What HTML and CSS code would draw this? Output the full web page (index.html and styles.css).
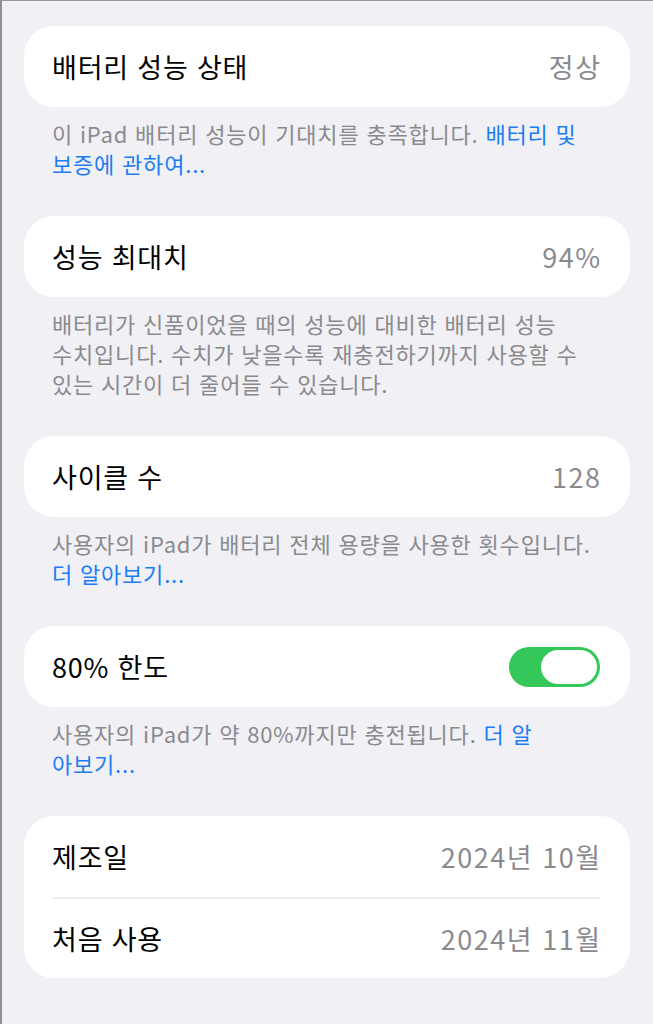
FILE: index.html
```html
<!DOCTYPE html>
<html lang="ko">
<head>
  <meta charset="UTF-8">
  <title>배터리 상태</title>
  <link rel="stylesheet" href="styles.css">
</head>
<body>

  <div class="page">

    <!-- 배터리 성능 상태 -->
    <div class="group">
      <div class="row">
        <span class="label">배터리 성능 상태</span>
        <span class="value">정상</span>
      </div>
    </div>
    <p class="note">이 iPad 배터리 성능이 기대치를 충족합니다. <a href="#">배터리 및<br>보증에 관하여...</a></p>

    <!-- 성능 최대치 -->
    <div class="group">
      <div class="row">
        <span class="label">성능 최대치</span>
        <span class="value">94%</span>
      </div>
    </div>
    <p class="note">배터리가 신품이었을 때의 성능에 대비한 배터리 성능<br>수치입니다. 수치가 낮을수록 재충전하기까지 사용할 수<br>있는 시간이 더 줄어들 수 있습니다.</p>

    <!-- 사이클 수 -->
    <div class="group">
      <div class="row">
        <span class="label">사이클 수</span>
        <span class="value">128</span>
      </div>
    </div>
    <p class="note">사용자의 iPad가 배터리 전체 용량을 사용한 횟수입니다.<br><a href="#">더 알아보기...</a></p>

    <!-- 80% 한도 -->
    <div class="group">
      <div class="row">
        <span class="label">80% 한도</span>
        <span class="toggle on"><span class="knob"></span></span>
      </div>
    </div>
    <p class="note">사용자의 iPad가 약 80%까지만 충전됩니다. <a href="#">더 알<br>아보기...</a></p>

    <!-- 날짜 -->
    <div class="group">
      <div class="row">
        <span class="label">제조일</span>
        <span class="value">2024년 10월</span>
      </div>
      <div class="row">
        <span class="label">처음 사용</span>
        <span class="value">2024년 11월</span>
      </div>
    </div>

  </div>

</body>
</html>
```

FILE: styles.css
```css
* {
  box-sizing: border-box;
  margin: 0;
  padding: 0;
}

body {
  background: #f0f0f5;
  font-family: "Noto Sans CJK KR", "Noto Sans", sans-serif;
  color: #000;
  min-height: 100vh;
  border-left: 2px solid #8e8e93;
  border-top: 1px solid #9a9a9e;
  overflow: hidden;
}

.page {
  padding: 25px 23px 0 22px;
}

.group {
  background: #fff;
  border-radius: 30px;
  padding: 0 30px 0 28px;
}

.row {
  display: flex;
  justify-content: space-between;
  align-items: center;
  height: 81px;
  font-size: 27px;
  letter-spacing: 0.8px;
}

.row + .row {
  border-top: 2px solid #ececf0;
}

.label {
  color: #000;
}

.value {
  color: #8a8a8e;
  letter-spacing: 1.5px;
  margin-right: -1.5px;
}

.note {
  color: #8a8a8e;
  font-size: 22px;
  letter-spacing: 0.8px;
  line-height: 30px;
  padding: 11px 24px 0 28px;
  margin-bottom: 38px;
}

.note a {
  color: #1c7cf2;
  text-decoration: none;
}

/* Toggle switch */
.toggle {
  width: 91px;
  height: 40px;
  border-radius: 20px;
  background: #e5e5ea;
  padding: 3px;
  display: flex;
}

.toggle.on {
  background: #34c759;
  justify-content: flex-end;
}

.knob {
  width: 56px;
  height: 34px;
  border-radius: 17px;
  background: #fff;
  box-shadow: 0 0 0 1px rgba(52, 199, 89, 0.5);
}
```
